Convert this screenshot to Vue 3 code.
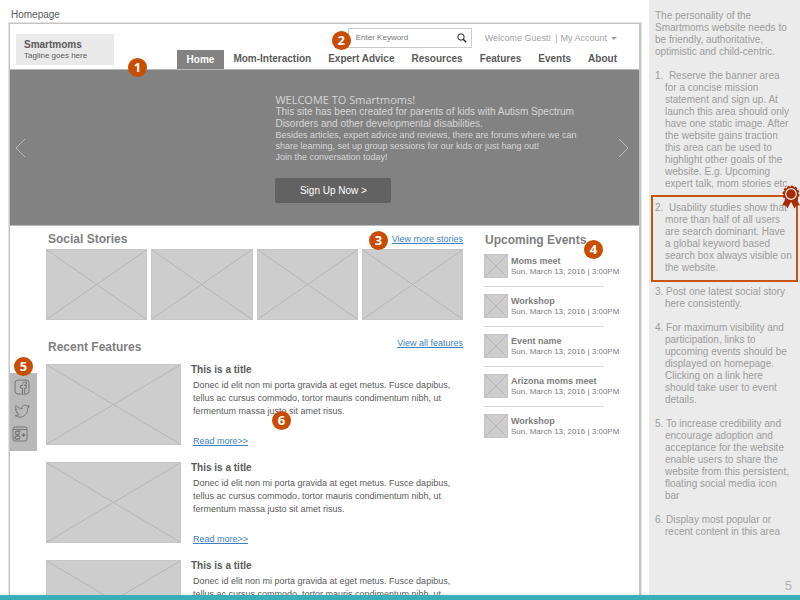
<script setup>
const nav = ['Home', 'Mom-Interaction', 'Expert Advice', 'Resources', 'Features', 'Events', 'About']

const events = ['Moms meet', 'Workshop', 'Event name', 'Arizona moms meet', 'Workshop']

const notes = [
  '1.\u00a0 Reserve the banner area\nfor a concise mission\nstatement and sign up. At\nlaunch this area should only\nhave one static image. After\nthe website gains traction\nthis area can be used to\nhighlight other goals of the\nwebsite. E.g. Upcoming\nexpert talk, mom stories etc.',
  '2.\u00a0 Usability studies show that\nmore than half of all users\nare search dominant. Have\na global keyword based\nsearch box always visible on\nthe website.',
  '3. Post one latest social story\nhere consistently.',
  '4. For maximum visibility and\nparticipation, links to\nupcoming events should be\ndisplayed on homepage.\nClicking on a link here\nshould take user to event\ndetails.',
  '5. To increase credibility and\nencourage adoption and\nacceptance for the website\nenable users to share the\nwebsite from this persistent,\nfloating social media icon\nbar',
  '6. Display most popular or\nrecent content in this area',
]
</script>

<template>
  <div class="page">
    <div class="board">
      <section class="mock">
        <p class="caption">Homepage</p>
        <div class="frame">
          <header class="header">
            <div class="logo">
              <strong>Smartmoms</strong>
              <span>Tagline goes here</span>
            </div>
            <span class="marker m1">1</span>
            <div class="header-right">
              <div class="tools">
                <form class="search" @submit.prevent>
                  <input type="text" placeholder="Enter Keyword" aria-label="Enter Keyword" />
                  <button type="submit" aria-label="Search">
                    <svg viewBox="0 0 10 10" width="10" height="10">
                      <circle cx="4" cy="4" r="3.200" fill="none" stroke="#222" />
                      <path d="M6.200 6.200 9.200 9.200" stroke="#222" stroke-width="1.400" />
                    </svg>
                  </button>
                  <span class="marker m2">2</span>
                </form>
                <div class="account">
                  <span>Welcome Guest!</span>
                  <span class="bar">|</span>
                  <a href="#account">My Account</a>
                  <i class="caret"></i>
                </div>
              </div>
              <nav class="nav">
                <a v-for="(item, i) in nav" :key="item" href="#" :class="{ active: i === 0 }">{{ item }}</a>
              </nav>
            </div>
          </header>

          <section class="banner">
            <button class="arrow" aria-label="Previous">
              <svg viewBox="0 0 11 20" width="11" height="20"><path d="M10 1 1 10l9 9" /></svg>
            </button>
            <div class="copy">
              <h1>WELCOME TO Smartmoms!</h1>
              <p class="lead">This site has been created for parents of kids with Autism Spectrum<br />Disorders and other developmental disabilities.</p>
              <p class="more">Besides articles, expert advice and reviews, there are forums where we can<br />share learning, set up group sessions for our kids or just hang out!<br />Join the conversation today!</p>
              <button class="signup">Sign Up Now &gt;</button>
            </div>
            <button class="arrow" aria-label="Next">
              <svg viewBox="0 0 11 20" width="11" height="20"><path d="M1 1l9 9-9 9" /></svg>
            </button>
          </section>

          <div class="content">
            <main class="main">
              <div class="row">
                <h2>Social Stories</h2>
                <span class="anchor">
                  <span class="marker m3">3</span>
                  <a class="link" href="#stories">View more stories</a>
                </span>
              </div>
              <div class="stories">
                <svg v-for="n in 4" :key="n" class="ph" viewBox="0 0 100 100" preserveAspectRatio="none">
                  <path d="M0 0 100 100M100 0 0 100" />
                </svg>
              </div>
              <div class="row recent">
                <h2>Recent Features</h2>
                <a class="link" href="#features">View all features</a>
              </div>
              <article v-for="n in 3" :key="n" class="feature">
                <svg class="ph" viewBox="0 0 100 100" preserveAspectRatio="none">
                  <path d="M0 0 100 100M100 0 0 100" />
                </svg>
                <div class="text">
                  <h3>This is a title</h3>
                  <p>Donec id elit non mi porta gravida at eget metus. Fusce dapibus,<br />tellus ac cursus commodo, tortor mauris condimentum nibh, ut<br />fermentum massa justo sit amet risus.</p>
                  <a class="link" href="#article">Read more&gt;&gt;</a>
                  <span v-if="n === 1" class="marker m6">6</span>
                </div>
              </article>
            </main>

            <section class="events">
              <h2>Upcoming Events</h2>
              <span class="marker m4">4</span>
              <ul>
                <li v-for="(name, i) in events" :key="i">
                  <svg class="ph" viewBox="0 0 100 100" preserveAspectRatio="none">
                    <path d="M0 0 100 100M100 0 0 100" />
                  </svg>
                  <div>
                    <strong>{{ name }}</strong>
                    <span>Sun, March 13, 2016 | 3:00PM</span>
                  </div>
                </li>
              </ul>
            </section>
          </div>

          <div class="social">
            <span class="marker m5">5</span>
            <a href="#facebook" aria-label="Facebook">
              <svg viewBox="0 0 16 16" width="16" height="16">
                <rect x="1" y="1" width="14" height="14" rx="3" />
                <path d="M8.500 14.500V9H6.500V6.500h2V5.500c0-2 1.200-2.800 4-2.500v2c-1.500 0-1.800.200-1.800 1.500h1.800L12.200 9h-1.500v5.500" />
              </svg>
            </a>
            <a href="#twitter" aria-label="Twitter">
              <svg viewBox="0 0 16 16" width="16" height="16">
                <path d="M1 12.500c1.600.200 3-.200 4.200-1C3.800 11.200 3 10.500 2.600 9.500h1.200C2.300 8.800 1.500 7.800 1.500 6.300l1.300.4C1.500 5.500 1.200 4 2 2.500c1.600 2 3.600 3 6 3.200-.4-2 1-3.500 2.700-3.500 1 0 1.700.4 2.300 1l1.700-.7-1 1.600 1.500-.4-1.500 1.700c.2 5-3.500 8.700-7.700 8.700-1.800 0-3.500-.600-5-1.600Z" />
              </svg>
            </a>
            <a class="google" href="#google" aria-label="Google Plus">
              <svg viewBox="0 0 16 16" width="16" height="16">
                <rect x="1" y="1" width="14" height="14" rx="2" />
                <path d="M1.500 3.500h13" />
                <path
                  d="M8.500 5.200H5.800c-3.200 0-2.800 3.500-.4 3.500 2.600 0 2.400-3.400.4-3.400M5.500 8.700c.3 1 2.500 1.200 2.500 2.800 0 2.200-5 2.200-5 .2 0-1.500 1.500-1.700 3.200-1.700M9.500 9h4M11.500 7v4"
                  stroke-width="1.300"
                />
              </svg>
            </a>
          </div>
        </div>
      </section>

      <aside class="notes">
        <p>The personality of the<br />Smartmoms website needs to<br />be friendly, authoritative,<br />optimistic and child-centric.</p>
        <ol>
          <li v-for="(note, i) in notes" :key="i" :class="{ key: i === 1 }">{{ note }}<svg v-if="i === 1" class="ribbon" viewBox="0 0 18 24" width="18" height="24">
              <path d="M4 13 0 20.500l3.500-.3L5.500 23.500 9 16.500l3.500 7 2-3.300 3.500.3L14 13Z" fill="#a62c00" />
              <circle cx="9" cy="9" r="7.500" fill="#a62c00" stroke="#a62c00" stroke-width="2" stroke-dasharray="2.500 1.400" />
              <circle cx="9" cy="9" r="5.300" fill="none" stroke="#ebebeb" stroke-width="1.200" />
            </svg></li>
        </ol>
        <span class="number">5</span>
      </aside>
    </div>
    <div class="strip"></div>
  </div>
</template>

<style>
body {
  margin: 0;
}
</style>

<style scoped>
.page {
  display: flex;
  flex-direction: column;
  height: 100vh;
  overflow: hidden;
  background: #fff;
  color: #5a5a5a;
  font: 10px/12px "Liberation Sans", Arial, sans-serif;
}
.page * {
  box-sizing: border-box;
}
h1,
h2,
h3,
p,
ol,
ul {
  margin: 0;
  padding: 0;
  list-style: none;
}
a {
  color: inherit;
  text-decoration: none;
}
button {
  border: 0;
  padding: 0;
  background: none;
  font: inherit;
}
.board {
  display: flex;
  flex: 1;
  min-height: 0;
}
.strip {
  height: 5px;
  background: #3aaeb8;
}
.mock {
  display: flex;
  flex: 1;
  flex-direction: column;
  min-width: 0;
  padding: 9px 8px 0 9px;
  overflow: hidden;
}
.caption {
  padding: 0 2px 2px;
}
.frame {
  position: relative;
  flex: 1 0 auto;
  border: solid #c4c4c4;
  border-width: 1px 2px 0 1px;
  box-shadow: 0 0 0 1px #e2e2e2;
}

.header {
  position: relative;
  display: flex;
  justify-content: space-between;
  border-bottom: 1px solid #b8b8b8;
  padding: 4px 22px 0 6px;
}
.logo {
  align-self: flex-start;
  width: 98px;
  margin-top: 6px;
  padding: 5px 8px 4px;
  background: #e9e9e9;
}
.logo strong,
.logo span {
  display: block;
}
.logo span {
  font-size: 8px;
  line-height: 10px;
}
.header-right {
  display: flex;
  flex-direction: column;
  align-items: flex-end;
  gap: 2px;
}
.tools {
  display: flex;
  align-items: center;
  gap: 13px;
}
.search {
  position: relative;
  display: flex;
  align-items: center;
  width: 124px;
  height: 20px;
  border: 1px solid #ccc;
  padding: 0 4px 0 7px;
}
.search input {
  flex: 1;
  min-width: 0;
  border: 0;
  padding: 0;
  outline: 0;
  background: none;
  font: 8px/12px "Liberation Sans", Arial, sans-serif;
}
.search input::placeholder {
  color: #767676;
  opacity: 1;
}
.search svg {
  display: block;
}
.account {
  display: flex;
  align-items: center;
  color: #a2a2a2;
  font-size: 9px;
}
.bar {
  margin: 0 3px 0 4px;
}
.caret {
  margin-left: 4px;
  border: solid transparent;
  border-width: 3px 3px 0;
  border-top-color: #a2a2a2;
}
.nav {
  display: flex;
  gap: 17px;
  font-weight: bold;
  line-height: 18px;
}
.nav .active {
  margin-right: -8px;
  padding: 1px 10px 0;
  background: #828282;
  color: #fff;
}

.banner {
  display: flex;
  align-items: center;
  justify-content: space-between;
  border-bottom: 1px solid #bbb;
  padding: 24px 10px 22px 5px;
  background: #828282;
  color: #d6d6d6;
}
.arrow {
  padding-bottom: 2px;
}
.arrow svg {
  display: block;
  fill: none;
  stroke: #bdbdbd;
}
.copy {
  margin-left: 208px;
  white-space: nowrap;
}
.copy h1 {
  font: 11px/12px "Open Sans", "Noto Sans", sans-serif;
}
.more {
  font-size: 9px;
  line-height: 11px;
}
.signup {
  display: block;
  width: 116px;
  margin-top: 15px;
  border-radius: 2px;
  background: #626262;
  color: #fff;
  line-height: 25px;
}

.content {
  display: flex;
  gap: 20px;
  padding: 6px 35px 0 36px;
}
.main {
  flex: 1;
  min-width: 0;
}
h2 {
  padding-left: 2px;
  color: #808080;
  font-size: 12px;
  line-height: 14px;
}
.row {
  display: flex;
  justify-content: space-between;
  align-items: flex-start;
  margin-bottom: 3px;
}
.recent {
  margin: 17px 0 10px;
}
.recent h2 {
  padding-top: 3px;
}
.link {
  color: #3d7fc1;
  font-size: 9px;
  line-height: 12px;
  text-decoration: underline;
}
.anchor {
  position: relative;
  padding-top: 1px;
}
.ph {
  display: block;
  border: 1px solid #c6c6c6;
  background: #cdcdcd;
}
.ph path {
  fill: none;
  stroke: #b6b6b6;
  vector-effect: non-scaling-stroke;
}
.stories {
  display: grid;
  grid-template-columns: repeat(4, 1fr);
  gap: 4px;
}
.stories .ph {
  width: 100%;
  height: 71px;
}
.feature {
  display: flex;
  gap: 10px;
  margin-bottom: 15px;
}
.feature .ph {
  flex: none;
  width: 135px;
  height: 81px;
}
.text {
  position: relative;
  height: 83px;
  white-space: nowrap;
}
.text h3 {
  font-size: 10px;
  line-height: 12px;
}
.text p {
  margin: 3px 0 17px;
  padding-left: 2px;
  font-size: 9px;
  line-height: 13px;
}
.text .link {
  margin-left: 2px;
}

.events {
  position: relative;
  width: 121px;
  color: #7c7c7c;
  white-space: nowrap;
}
.events h2 {
  margin: 1px 0 7px;
}
.events li {
  display: flex;
  gap: 3px;
  margin-bottom: 7px;
  border-bottom: 1px solid #d4d4d4;
  padding: 0 0 8px 1px;
}
.events li:last-child {
  border: 0;
}
.events .ph {
  flex: none;
  width: 24px;
  height: 24px;
}
.events strong,
.events li span {
  display: block;
}
.events strong {
  padding-top: 2px;
  font-size: 9px;
  line-height: 11px;
}
.events li span {
  font-size: 8px;
  line-height: 10px;
}

.social {
  position: absolute;
  top: 349px;
  left: 0;
  display: flex;
  flex-direction: column;
  gap: 8px;
  width: 27px;
  padding: 6px 0 8px 4px;
  background: #b9b9b9;
}
.social svg {
  display: block;
  fill: none;
  stroke: #777;
}
.social .google {
  margin: -1px 0 1px -2px;
}

.marker {
  position: absolute;
  z-index: 1;
  width: 19px;
  height: 19px;
  border-radius: 50%;
  background: #c94d00;
  color: #fff;
  font: bold 13px/19px "Open Sans", "Noto Sans", sans-serif;
  text-align: center;
}
.m1 {
  top: 34px;
  left: 118px;
}
.m2 {
  top: 2px;
  left: -17px;
}
.m3 {
  top: -1px;
  right: 75px;
}
.m4 {
  top: 8px;
  left: 101px;
}
.m5 {
  top: -16px;
  left: 4px;
}
.m6 {
  top: 47px;
  left: 81px;
}

.notes {
  display: flex;
  flex: none;
  flex-direction: column;
  width: 151px;
  padding: 10px 8px 3px 6px;
  background: #ebebeb;
  color: #9c9c9c;
  white-space: nowrap;
}
.notes li {
  position: relative;
  margin-top: 12px;
  padding-left: 10px;
  text-indent: -10px;
  white-space: pre;
}
.key::after {
  position: absolute;
  inset: -7px -6px -8px -4px;
  border: 2px solid #cb5310;
  content: "";
}
.ribbon {
  position: absolute;
  z-index: 1;
  top: -17px;
  right: -8px;
}
.number {
  margin-top: auto;
  align-self: flex-end;
  color: #b0b0b0;
  font-size: 13px;
}
</style>
